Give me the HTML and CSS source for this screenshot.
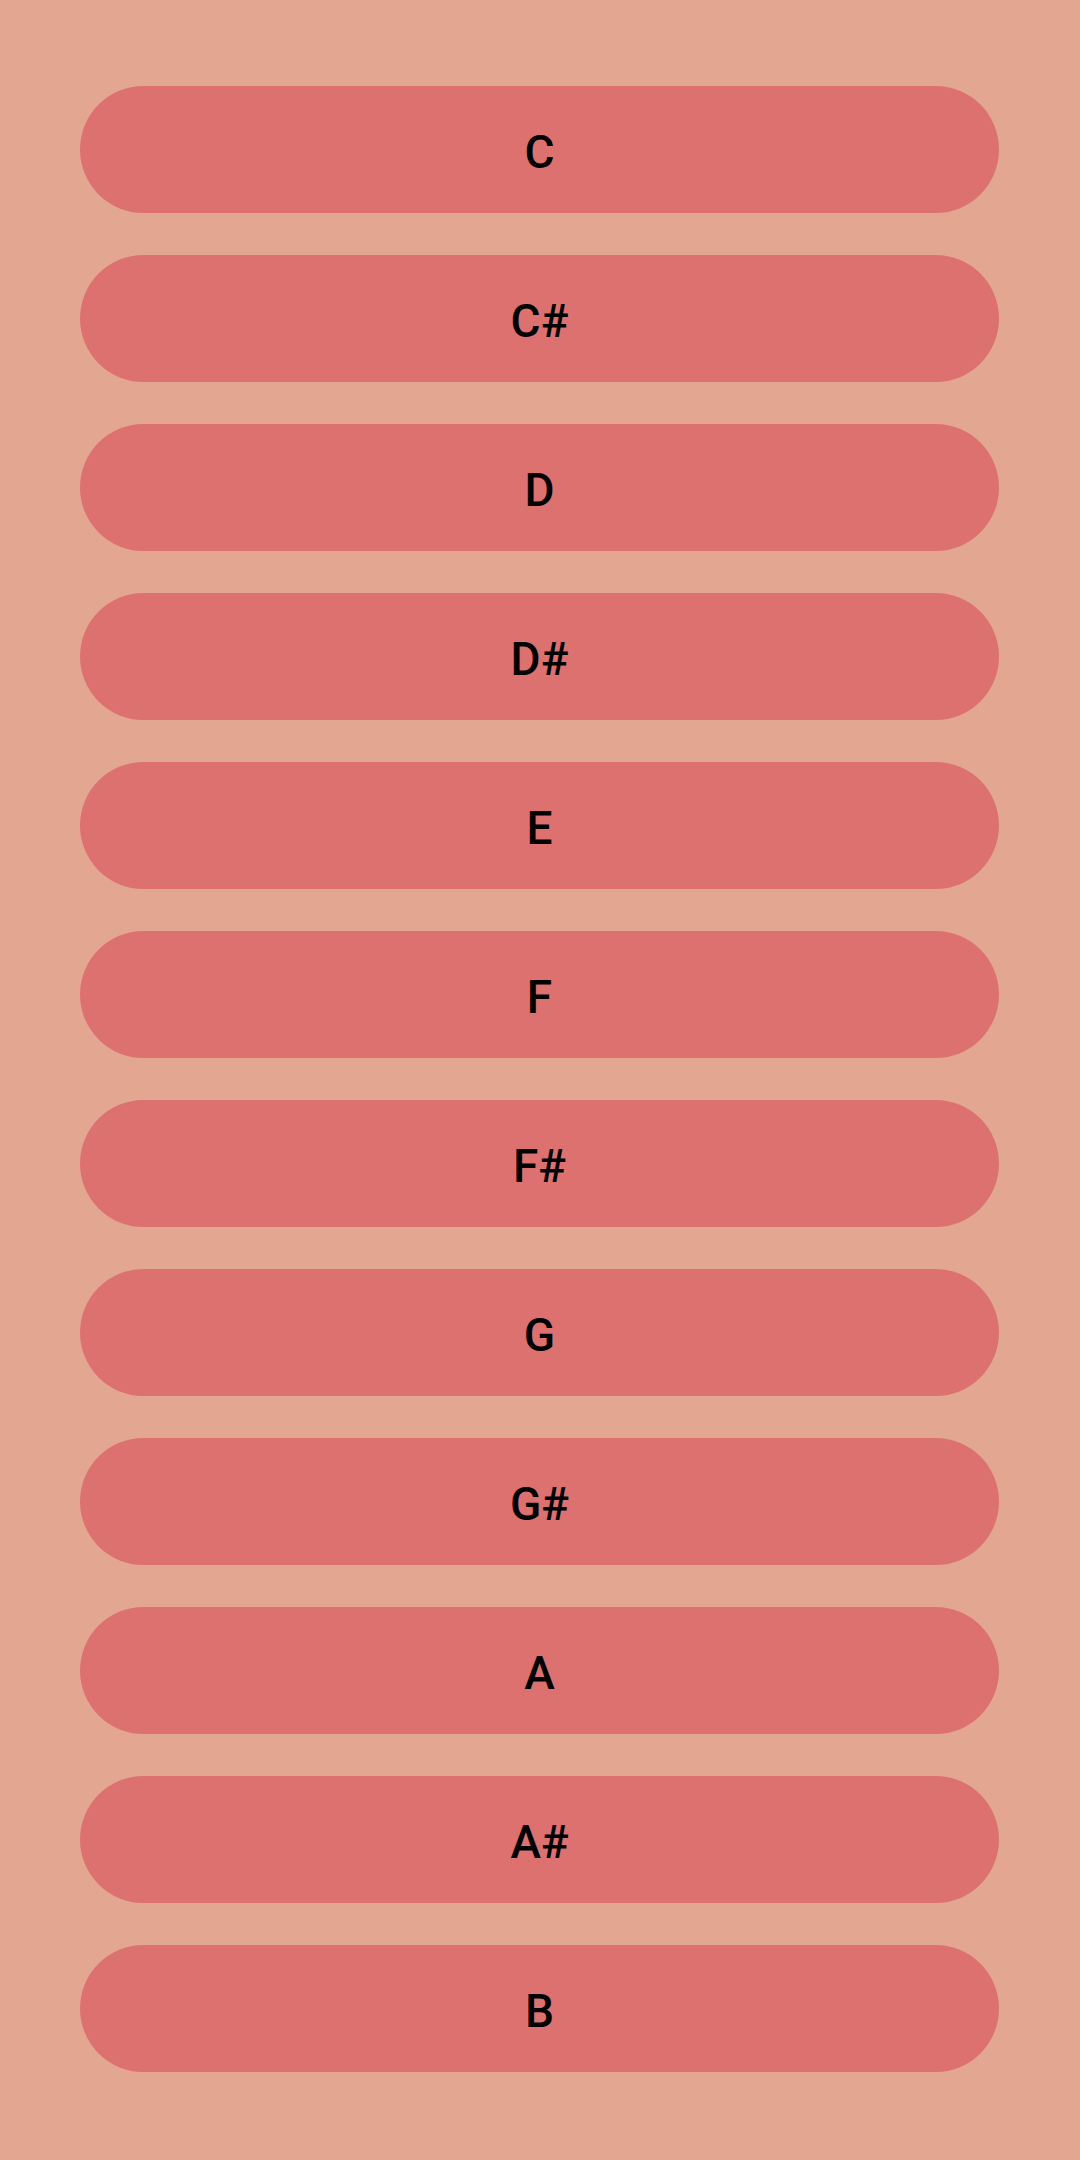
FILE: index.html
```html
<!DOCTYPE html>
<html>
<head>
<meta charset="utf-8">
<link rel="stylesheet" href="styles.css">
</head>
<body>
<main class="keys">
  <button class="key">C</button>
  <button class="key">C#</button>
  <button class="key">D</button>
  <button class="key">D#</button>
  <button class="key">E</button>
  <button class="key">F</button>
  <button class="key">F#</button>
  <button class="key">G</button>
  <button class="key">G#</button>
  <button class="key">A</button>
  <button class="key">A#</button>
  <button class="key">B</button>
</main>
</body>
</html>
```
FILE: styles.css
```css
html, body {
  margin: 0;
  padding: 0;
  background: #e2a691;
}
.keys {
  display: flex;
  flex-direction: column;
  gap: 42px;
  padding: 86px 81px 0 80px;
  height: 2160px;
  box-sizing: border-box;
}
.key {
  height: 127px;
  border: none;
  border-radius: 64px;
  background: #dd7170;
  color: #000;
  font-family: Roboto, "Liberation Sans", sans-serif;
  font-size: 46px;
  font-weight: 500;
  padding: 0;
  padding-top: 4px;
  margin: 0;
}
```
